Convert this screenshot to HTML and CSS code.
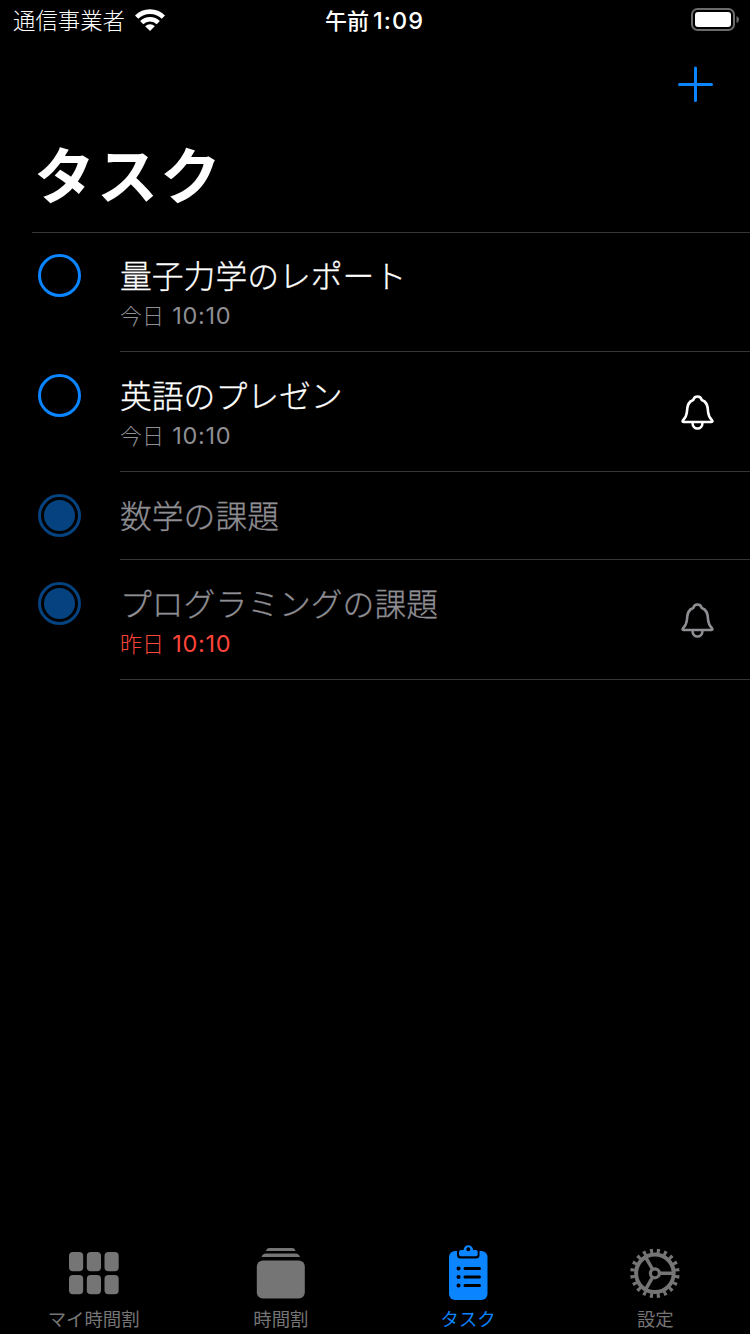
FILE: index.html
```
<!DOCTYPE html>
<html lang="ja">

<head>
  <meta charset="UTF-8">
  <title>タスク</title>
  <link rel="stylesheet" href="styles.css">
</head>

<body>
  <div class="status-bar">
    <div class="carrier">
      <span>通信事業者</span>
      <svg class="wifi" width="30" height="22" viewBox="0 0 30 22">
        <path d="M1.600 8.200A19 19 0 0 1 28.400 8.200" fill="none" stroke="#fff" stroke-width="4.600"/>
        <path d="M6.700 13.600A11.800 11.800 0 0 1 23.300 13.600" fill="none" stroke="#fff" stroke-width="4.400"/>
        <path d="M15 22L10.200 17.300A6.500 6.500 0 0 1 19.800 17.300Z" fill="#fff"/>
      </svg>
    </div>
    <div class="clock"><span class="ampm">午前</span><span class="clock-time">1:09</span></div>
    <svg class="battery" width="48" height="23" viewBox="0 0 48 23">
      <rect x="1" y="1" width="42" height="21" rx="5.500" fill="none" stroke="#6b6b6b" stroke-width="2"/>
      <rect x="4" y="4" width="36" height="15" rx="3" fill="#fff"/>
      <path d="M45.500 8Q48 9.200 48 11.500Q48 13.800 45.500 15Z" fill="#6b6b6b"/>
    </svg>
  </div>

  <div class="nav-bar">
    <svg width="36" height="36" viewBox="0 0 36 36">
      <path d="M17.500 2V34.500M1.500 18.500H33.500" stroke="#0a84ff" stroke-width="3" stroke-linecap="round"/>
    </svg>
  </div>

  <h1>タスク</h1>

  <ul class="task-list">
    <li class="task">
      <span class="check"></span>
      <div class="task-body">
        <div class="task-text">
          <p class="task-title">量子力学のレポート</p>
          <p class="task-date">今日 <span class="time">10:10</span></p>
        </div>
      </div>
    </li>
    <li class="task">
      <span class="check"></span>
      <div class="task-body">
        <div class="task-text">
          <p class="task-title">英語のプレゼン</p>
          <p class="task-date">今日 <span class="time">10:10</span></p>
        </div>
        <svg class="bell" width="34" height="36" viewBox="0 0 34 36">
          <path d="M2.300 27C1.500 27 1.300 26.200 1.900 25.500C4.300 22.900 5.600 21.500 5.900 17C6.200 10.500 7.300 6.500 12.200 5C12.800 2.900 14.300 1.500 16.500 1.500C18.700 1.500 20.200 2.900 20.800 5C25.700 6.500 26.800 10.500 27.100 17C27.400 21.500 28.700 22.900 31.100 25.500C31.700 26.200 31.500 27 30.700 27ZM11.500 27.500C11.500 35.500 21.500 35.500 21.500 27.500"/>
        </svg>
      </div>
    </li>
    <li class="task done short">
      <span class="check"></span>
      <div class="task-body">
        <div class="task-text">
          <p class="task-title">数学の課題</p>
        </div>
      </div>
    </li>
    <li class="task done">
      <span class="check"></span>
      <div class="task-body">
        <div class="task-text">
          <p class="task-title">プログラミングの課題</p>
          <p class="task-date overdue">昨日 <span class="time">10:10</span></p>
        </div>
        <svg class="bell" width="34" height="36" viewBox="0 0 34 36">
          <path d="M2.300 27C1.500 27 1.300 26.200 1.900 25.500C4.300 22.900 5.600 21.500 5.900 17C6.200 10.500 7.300 6.500 12.200 5C12.800 2.900 14.300 1.500 16.500 1.500C18.700 1.500 20.200 2.900 20.800 5C25.700 6.500 26.800 10.500 27.100 17C27.400 21.500 28.700 22.900 31.100 25.500C31.700 26.200 31.500 27 30.700 27ZM11.500 27.500C11.500 35.500 21.500 35.500 21.500 27.500"/>
        </svg>
      </div>
    </li>
  </ul>

  <nav class="tab-bar">
    <a class="tab">
      <svg width="60" height="60" viewBox="0 0 60 60" fill="currentColor">
        <rect x="5" y="9" width="14.200" height="19.300" rx="4"/>
        <rect x="22.800" y="9" width="14.200" height="19.300" rx="4"/>
        <rect x="40.500" y="9" width="14.200" height="19.300" rx="4"/>
        <rect x="5" y="32" width="14.200" height="19.300" rx="4"/>
        <rect x="22.800" y="32" width="14.200" height="19.300" rx="4"/>
        <rect x="40.500" y="32" width="14.200" height="19.300" rx="4"/>
      </svg>
      <span>マイ時間割</span>
    </a>
    <a class="tab">
      <svg width="60" height="60" viewBox="0 0 60 60" fill="currentColor">
        <path d="M15 8Q15.500 5 18.500 5H41Q44 5 44.500 8Z"/>
        <path d="M10.500 14Q11.500 10.500 15 10.500H44.500Q48 10.500 49 14Z"/>
        <rect x="5.800" y="17.500" width="48" height="38" rx="6"/>
      </svg>
      <span>時間割</span>
    </a>
    <a class="tab active">
      <svg width="60" height="60" viewBox="-2 0 60 60" fill="currentColor">
        <rect x="9" y="8" width="38.500" height="49" rx="6"/>
        <path d="M17 7V12Q17 15.500 20.500 15.500H36Q39.500 15.500 39.500 12V7Z" fill="#000"/>
        <path fill-rule="evenodd" d="M21 7H23.500C24 .5 32.700 .5 33.200 7H36Q37.700 7 37.700 9V11.500Q37.700 13.300 36 13.300H21Q19 13.300 19 11.500V9Q19 7 21 7ZM28.300 4.200A2 2 0 1 0 28.300 8.200A2 2 0 1 0 28.300 4.200Z"/>
        <g stroke="#000" stroke-width="3" stroke-linecap="round">
          <path d="M25 25.500H39.500M25 34H39.500M25 42.500H39.500"/>
          <path d="M18.500 25.500H18.600M18.500 34H18.600M18.500 42.500H18.600" stroke-width="4"/>
        </g>
      </svg>
      <span>タスク</span>
    </a>
    <a class="tab">
      <svg width="60" height="60" viewBox="0 0 60 60" fill="none" stroke="currentColor">
        <g transform="translate(29.900 30.300)">
          <circle r="18.800" stroke-width="4"/>
          <circle r="22.500" pathLength="200" stroke-width="4.500" stroke-dasharray="4.400 5.600" stroke-dashoffset="-2.800"/>
          <circle r="4.500" stroke-width="3.200"/>
          <path d="M5 0H18M-2.500 -4.300L-9 -15.600M-2.500 4.300L-9 15.600" stroke-width="3.500"/>
        </g>
      </svg>
      <span>設定</span>
    </a>
  </nav>
</body>

</html>
```
FILE: styles.css
```
* {
  box-sizing: border-box;
}

body {
  margin: 0;
  height: 1334px;
  display: flex;
  flex-direction: column;
  overflow: hidden;
  background-color: #000;
  color: #fff;
  font-family: Inter, "Noto Sans CJK JP", sans-serif;
}

/* status bar */
.status-bar {
  height: 40px;
  padding: 0 11px 0 13px;
  display: grid;
  grid-template-columns: 1fr auto 1fr;
  align-items: center;
}

.carrier {
  display: flex;
  align-items: center;
  gap: 10px;
  font-size: 22.4px;
  font-weight: 300;
  line-height: 40px;
  padding-top: 1px;
}

.wifi {
  margin-top: -3px;
}

.clock {
  display: flex;
  align-items: baseline;
  margin-right: 3px;
  padding-top: 1px;
  line-height: 40px;
}

.ampm {
  font-size: 22px;
  font-weight: 500;
  margin-right: 4px;
}

.clock-time {
  font-size: 23.5px;
  font-weight: 500;
  letter-spacing: 1px;
}

.battery {
  justify-self: end;
  margin-top: -2px;
}

.nav-bar {
  height: 88px;
  padding: 26px 36px 0 0;
  display: flex;
  justify-content: flex-end;
}

h1 {
  margin: 0;
  height: 104px;
  padding-left: 34px;
  font-size: 61px;
  font-weight: 700;
  line-height: 98px;
  letter-spacing: 2px;
}

/* tasks */
.task-list {
  flex: 1;
  margin: 0 0 0 32px;
  padding: 0;
  list-style: none;
  border-top: 1px solid #363638;
}

.task {
  height: 120px;
  display: flex;
}

.task:first-child {
  height: 119px;
}

.task:first-child .task-text {
  margin-top: -1px;
}

.short {
  height: 88px;
}

.check {
  width: 43px;
  height: 43px;
  margin: 22px 39px 0 6px;
  border: 3px solid #0a84ff;
  border-radius: 50%;
}

.task:first-child .check {
  margin-top: 21px;
}

.task-body {
  flex: 1;
  display: flex;
  align-items: center;
  justify-content: space-between;
  padding: 2px 35px 0 0;
  border-bottom: 1px solid #363638;
}

.task-text {
  align-self: flex-start;
  padding-top: 20px;
}

.task-title {
  margin: 0;
  font-size: 31.8px;
  font-weight: 300;
  line-height: 46px;
  -webkit-text-stroke: 0.3px;
}

.task-date {
  margin: -2px 0 0;
  font-size: 22px;
  font-weight: 300;
  line-height: 36px;
  color: #8e8e93;
}

.time {
  margin-left: 2px;
  font-size: 23.5px;
  font-weight: 400;
  letter-spacing: 0.7px;
}

.bell {
  fill: none;
  stroke: #fff;
  stroke-width: 2.6;
}

/* finished tasks are dimmed */
.done .check {
  border-color: #05427f;
  background: #05427f content-box;
  padding: 3px;
}

.done .task-title {
  color: #8e8e93;
}

.done .bell {
  stroke: #8e8e93;
}

.done .overdue {
  color: #ff453a;
}

/* tab bar */
.tab-bar {
  height: 91px;
  padding-right: 1px;
  display: grid;
  grid-template-columns: repeat(4, 1fr);
}

.tab {
  display: flex;
  flex-direction: column;
  align-items: center;
  color: #757575;
  font-size: 18.4px;
  line-height: 32px;
}

.tab svg {
  flex: none;
}

.active {
  color: #0a84ff;
}
```
